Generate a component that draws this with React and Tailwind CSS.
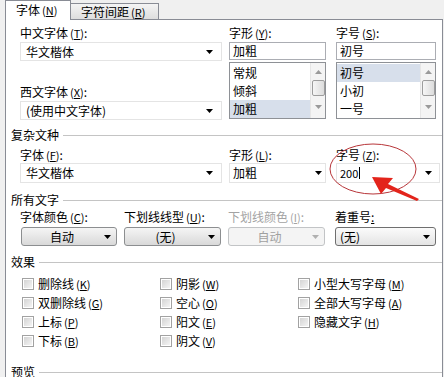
import React from 'react';

const font = { fontFamily: '"Noto Sans CJK SC", "Noto Sans", sans-serif' };

function Tri({ color = '#000' }) {
  return (
    <svg width="7" height="4" viewBox="0 0 7 4" className="shrink-0">
      <path d="M0 0h7L3.5 4z" fill={color} />
    </svg>
  );
}

function Key({ k }) {
  return (
    <span className="ml-[2px] text-[11px]">
      (<span className="underline">{k}</span>)
    </span>
  );
}

function Label({ text, k, colon = true, muted = false }) {
  return (
    <div className={`h-[14px] leading-[14px] text-[12px] whitespace-nowrap ${muted ? 'text-[#a3a3a3]' : 'text-black'}`}>
      {text}
      {k && <Key k={k} />}
      {colon && ':'}
    </div>
  );
}

function Combo({ value, className = '' }) {
  return (
    <div className={`flex items-center justify-between bg-white border border-[#e4e4e4] text-[12px] ${className}`}>
      <span className="leading-[14px]">{value}</span>
      <Tri />
    </div>
  );
}

function ScrollBar() {
  return (
    <div className="w-[15px] h-full flex flex-col items-center bg-[#f4f4f4] border-l border-[#e6e6e6]">
      <div className="h-[17px] flex items-center justify-center">
        <svg width="7" height="4" viewBox="0 0 7 4"><path d="M0 4h7L3.5 0z" fill="#9a9a9a" /></svg>
      </div>
      <div className="w-[13px] h-[16px] rounded-[2px] border border-[#9d9d9d] bg-gradient-to-r from-[#f6f6f6] to-[#dcdcdc]" />
      <div className="flex-1 flex items-center justify-center">
        <svg width="7" height="4" viewBox="0 0 7 4"><path d="M0 0h7L3.5 4z" fill="#9a9a9a" /></svg>
      </div>
    </div>
  );
}

function ListBox({ items, sel }) {
  return (
    <div className="mt-[2px] h-[57px] border border-[#8e9196] bg-white flex">
      <div className="flex-1 pt-[1px]">
        {items.map((it, i) => (
          <div
            key={it}
            className={`h-[18px] leading-[18px] pl-[3px] text-[12px] ${i === sel ? 'bg-[#d7dfeb]' : ''}`}
          >
            {it}
          </div>
        ))}
      </div>
      <ScrollBar />
    </div>
  );
}

function Section({ title, className = '' }) {
  return (
    <div className={`flex items-center pl-[5px] h-[14px] ${className}`}>
      <span className="text-[12px] leading-[14px] whitespace-nowrap">{title}</span>
      <div className="flex-1 h-px bg-[#c4c4c4] ml-[4px]" />
    </div>
  );
}

function Button({ value, disabled = false, left = false, className = '' }) {
  let look = 'border-[#8c8e90] bg-gradient-to-b from-[#f5f5f5] to-[#d9d9d9]';
  if (disabled) look = 'border-[#c2c4c6] bg-[#f4f4f4] text-[#a0a0a0]';
  else if (left) look = 'border-[#6f6f6f] bg-gradient-to-b from-[#fbfbfb] to-[#e4e4e4]';
  return (
    <div className={`h-[19px] flex items-center rounded-[3px] border text-[12px] ${look} ${className}`}>
      <span className={`flex-1 pl-[4px] leading-[14px] ${left ? '' : 'text-center'}`}>{value}</span>
      <span className="pr-[5px] pl-[6px] flex items-center">
        <Tri color={disabled ? '#b0b0b0' : '#000'} />
      </span>
    </div>
  );
}

function Check({ text, k }) {
  return (
    <div className="h-[19px] flex items-center">
      <div className="w-[12px] h-[12px] border border-[#a2a2a2] p-px bg-white">
        <div className="w-full h-full bg-gradient-to-br from-[#d4d4d4] to-[#f4f4f4]" />
      </div>
      <span className="ml-[4px] text-[12px] leading-[14px] whitespace-nowrap">
        {text}
        <Key k={k} />
      </span>
    </div>
  );
}

export default function App() {
  return (
    <div className="relative w-[444px] h-[377px] overflow-hidden bg-[#f0f0f0] text-black" style={font}>
      {/* tabs */}
      <div className="flex items-end h-[19px] pl-[5px]">
        <div className="relative z-10 w-[66px] h-[20px] -mb-px bg-white border border-b-0 border-[#898c95] pl-[10px] pt-[2px] text-[12px] leading-[14px]">
          字体<Key k="N" />
        </div>
        <div className="w-[88px] h-[16px] border border-l-0 border-b-0 border-[#898c95] bg-gradient-to-b from-[#f4f4f4] to-[#dedede] pl-[10px] pt-[1px] text-[12px] leading-[14px]">
          字符间距<Key k="R" />
        </div>
      </div>

      {/* panel */}
      <div className="ml-[5px] w-[438px] h-[360px] bg-white border border-b-0 border-[#898c95]">
        {/* font selection */}
        <div className="flex pt-[6px] pl-[14px]">
          <div className="w-[202px]">
            <Label text="中文字体" k="T" />
            <Combo value="华文楷体" className="mt-[2px] h-[19px] pl-[5px] pr-[8px]" />
            <div className="mt-[24px]">
              <Label text="西文字体" k="X" />
            </div>
            <Combo value="(使用中文字体)" className="mt-[2px] h-[19px] pl-[5px] pr-[8px]" />
          </div>
          <div className="w-[97px] ml-[7px]">
            <Label text="字形" k="Y" />
            <div className="mt-[2px] h-[18px] border border-[#abadb3] pl-[3px] text-[12px] leading-[16px]">加粗</div>
            <ListBox items={['常规', '倾斜', '加粗']} sel={2} />
          </div>
          <div className="w-[100px] ml-[10px]">
            <Label text="字号" k="S" />
            <div className="mt-[2px] h-[18px] border border-[#abadb3] pl-[3px] text-[12px] leading-[16px]">初号</div>
            <ListBox items={['初号', '小初', '一号']} sel={0} />
          </div>
        </div>

        <Section title="复杂文种" className="mt-[8px]" />
        <div className="flex pl-[14px] mt-[6px]">
          <div className="w-[202px]">
            <Label text="字体" k="F" />
            <Combo value="华文楷体" className="mt-[1px] h-[20px] pl-[5px] pr-[8px]" />
          </div>
          <div className="w-[97px] ml-[7px]">
            <Label text="字形" k="L" />
            <Combo value="加粗" className="mt-[1px] h-[20px] pl-[3px] pr-[3px]" />
          </div>
          <div className="w-[104px] ml-[10px]">
            <Label text="字号" k="Z" />
            <div className="mt-[1px] h-[20px] flex items-center justify-between bg-white border border-[#e4e4e4] pl-[3px] pr-[7px]">
              <span className="flex items-center text-[11px] leading-[14px]">
                200<span className="ml-px w-px h-[12px] bg-black" />
              </span>
              <Tri />
            </div>
          </div>
        </div>

        <Section title="所有文字" className="mt-[10px]" />
        <div className="flex mt-[3px] pl-[14px]">
          <div className="w-[97px]">
            <Label text="字体颜色" k="C" />
            <Button value="自动" className="mt-[3px] ml-px" />
          </div>
          <div className="w-[97px] ml-[7px]">
            <Label text="下划线线型" k="U" />
            <Button value="(无)" className="mt-[3px]" />
          </div>
          <div className="w-[97px] ml-[7px]">
            <Label text="下划线颜色" k="I" muted />
            <Button value="自动" disabled className="mt-[3px]" />
          </div>
          <div className="w-[101px] ml-[10px]">
            <div className="h-[14px] leading-[14px] text-[12px] whitespace-nowrap">
              着重号<span className="underline">:</span>
            </div>
            <Button value="(无)" left className="mt-[3px]" />
          </div>
        </div>

        <Section title="效果" className="mt-[9px]" />
        <div className="flex mt-[5px] pl-[16px]">
          <div className="w-[138px]">
            <Check text="删除线" k="K" />
            <Check text="双删除线" k="G" />
            <Check text="上标" k="P" />
            <Check text="下标" k="B" />
          </div>
          <div className="w-[138px]">
            <Check text="阴影" k="W" />
            <Check text="空心" k="O" />
            <Check text="阳文" k="E" />
            <Check text="阴文" k="V" />
          </div>
          <div>
            <Check text="小型大写字母" k="M" />
            <Check text="全部大写字母" k="A" />
            <Check text="隐藏文字" k="H" />
          </div>
        </div>

        <Section title="预览" className="mt-[15px]" />
      </div>

      {/* red annotation */}
      <svg className="absolute inset-0 pointer-events-none" width="444" height="377">
        <ellipse cx="373" cy="169" rx="43" ry="25" fill="none" stroke="#b8363a" strokeWidth="1" />
        <polygon
          points="372,177 393,178 388,184 419,199 417,201 386,188 381,194"
          fill="#e3241b"
        />
      </svg>
    </div>
  );
}
